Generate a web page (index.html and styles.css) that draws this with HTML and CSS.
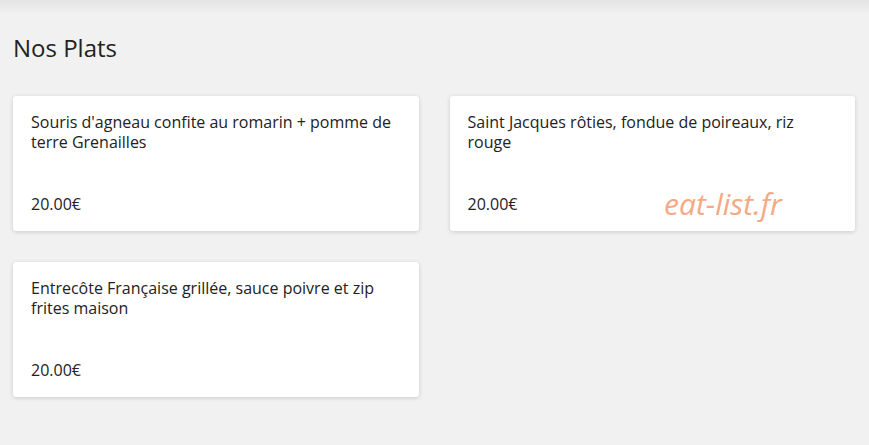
FILE: index.html
```html
<!DOCTYPE html>
<html lang="fr">
<head>
<meta charset="utf-8">
<title>Nos Plats</title>
<link rel="stylesheet" href="styles.css">
</head>
<body>
<div class="topshade"></div>
<main class="page">
  <h1 class="title">Nos Plats</h1>
  <div class="grid">
    <div class="card">
      <p class="dish">Souris d'agneau confite au romarin + pomme de terre Grenailles</p>
      <p class="price">20.00€</p>
    </div>
    <div class="card">
      <p class="dish">Saint Jacques rôties, fondue de poireaux, riz rouge</p>
      <p class="price">20.00€</p>
    </div>
    <div class="card">
      <p class="dish">Entrecôte Française grillée, sauce poivre et zip frites maison</p>
      <p class="price">20.00€</p>
    </div>
  </div>
</main>
<div class="watermark">eat-list.fr</div>
</body>
</html>
```
FILE: styles.css
```css
html, body {
  margin: 0;
  padding: 0;
  background: #f1f1f1;
  font-family: "Open Sans", "Liberation Sans", sans-serif;
  color: #222;
}
body {
  position: relative;
  min-height: 445px;
}
.topshade {
  position: absolute;
  top: 0;
  left: 0;
  right: 0;
  height: 14px;
  background: linear-gradient(#e4e4e4, #f1f1f1);
}
.page {
  position: relative;
  padding: 33px 14px 20px 13px;
}
.title {
  margin: 0 0 33px 0;
  font-size: 24px;
  font-weight: 400;
  line-height: 30px;
  color: #222;
}
.grid {
  display: grid;
  grid-template-columns: 1fr 1fr;
  column-gap: 31px;
  row-gap: 31px;
}
.card {
  background: #fff;
  border-radius: 3px;
  box-shadow: 0 1px 4px rgba(0, 0, 0, 0.16);
  padding: 16px 18px 17px 18px;
}
.dish {
  margin: 0 0 42px 0;
  font-size: 16px;
  line-height: 20px;
  min-height: 40px;
}
.price {
  margin: 0;
  font-size: 16px;
  line-height: 20px;
}
.watermark {
  position: absolute;
  left: 664px;
  top: 184px;
  font-family: "Open Sans", sans-serif;
  font-style: italic;
  font-size: 30px;
  line-height: 40px;
  color: #f5a983;
}
```
